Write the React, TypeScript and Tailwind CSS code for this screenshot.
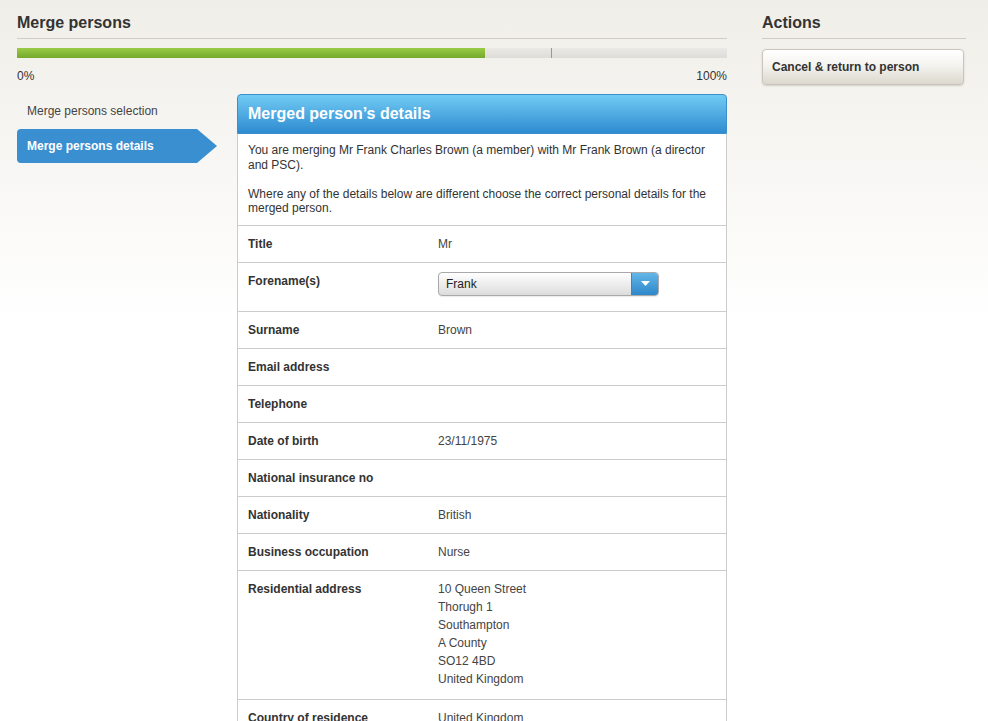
const rows: { label: string; value?: string[]; select?: string }[] = [
  { label: "Title", value: ["Mr"] },
  { label: "Forename(s)", select: "Frank" },
  { label: "Surname", value: ["Brown"] },
  { label: "Email address" },
  { label: "Telephone" },
  { label: "Date of birth", value: ["23/11/1975"] },
  { label: "National insurance no" },
  { label: "Nationality", value: ["British"] },
  { label: "Business occupation", value: ["Nurse"] },
  {
    label: "Residential address",
    value: ["10 Queen Street", "Thorugh 1", "Southampton", "A County", "SO12 4BD", "United Kingdom"],
  },
  { label: "Country of residence", value: ["United Kingdom"] },
];

function Select({ value }: { value: string }) {
  return (
    <div className="flex h-[24px] w-[221px] overflow-hidden rounded-[4px] border border-[#a9a9a9] bg-gradient-to-b from-white to-[#dcdcdc] shadow-[0_1px_1px_rgba(0,0,0,0.08)]">
      <span className="flex-1 pl-[7px] text-[12px] leading-[22px] text-[#222]">{value}</span>
      <span className="flex w-[27px] items-center justify-center border-l border-[#3a86c0] bg-gradient-to-b from-[#62b6e8] to-[#2d87c9]">
        <svg width="9" height="5" viewBox="0 0 9 5">
          <path d="M0 0h9L4.5 5z" fill="#fff" />
        </svg>
      </span>
    </div>
  );
}

export default function App() {
  return (
    <div className="min-h-[721px] bg-[linear-gradient(#f0eee8,#ffffff_320px)] font-['Liberation_Sans',Arial,sans-serif] text-[#333]">
      <div className="flex px-[17px] pt-[13px]">
        {/* main column */}
        <div className="w-[710px] shrink-0">
          <h1 className="border-b border-[#cfccc5] pb-[5px] text-[16px] font-bold leading-[20px] text-[#333]">
            Merge persons
          </h1>
          <div className="relative mt-[9px] flex h-[10px] bg-[linear-gradient(#ebe9e5,#dedcd8)]">
            <div className="h-full w-[468px] bg-[linear-gradient(#9acb46,#75a92c)]" />
            <div className="absolute left-[534px] top-0 h-full w-px bg-[#9a9893]" />
          </div>
          <div className="mt-[10px] flex justify-between text-[12px] leading-[16px] text-[#333]">
            <span>0%</span>
            <span>100%</span>
          </div>

          <div className="mt-[10px] flex gap-[20px]">
            <nav className="w-[200px] shrink-0 text-[12px]">
              <div className="h-[34px] pl-[10px] leading-[34px] text-[#444]">Merge persons selection</div>
              <div className="mt-px h-[34px] rounded-l-[4px] bg-[#3a8fd1] pl-[10px] font-bold leading-[34px] text-white [clip-path:polygon(0_0,calc(100%-20px)_0,100%_50%,calc(100%-20px)_100%,0_100%)]">
                Merge persons details
              </div>
            </nav>

            <section className="w-[490px] shrink-0">
              <div className="h-[40px] rounded-t-[4px] border border-[#3b8fcc] bg-[linear-gradient(#72cbf4,#2e8bd0)] pl-[10px] text-[16px] font-bold leading-[37px] text-white">
                Merged person’s details
              </div>
              <div className="border-x border-[#cccccc] bg-white">
                <div className="px-[10px] pb-[9px] pt-[9px] text-[12px] leading-[14.5px] text-[#333]">
                  <p>You are merging Mr Frank Charles Brown (a member) with Mr Frank Brown (a director and PSC).</p>
                  <p className="mt-[14.5px]">
                    Where any of the details below are different choose the correct personal details for the merged
                    person.
                  </p>
                </div>
                {rows.map((r) => (
                  <div key={r.label} className="flex border-t border-[#cccccc] px-[10px] text-[12px]">
                    <div className="w-[190px] shrink-0 py-[11px] font-bold leading-[14px] text-[#333]">{r.label}</div>
                    {r.select ? (
                      <div className="pb-[15px] pt-[9px]">
                        <Select value={r.select} />
                      </div>
                    ) : (
                      <div
                        className={
                          (r.value && r.value.length > 1 ? "pb-[11px] " : "pb-[9px] ") +
                          "pt-[9px] leading-[18px] text-[#444]"
                        }
                      >
                        {(r.value ?? [""]).map((v, i) => (
                          <div key={i} className="min-h-[18px]">
                            {v}
                          </div>
                        ))}
                      </div>
                    )}
                  </div>
                ))}
              </div>
            </section>
          </div>
        </div>

        {/* actions column */}
        <aside className="ml-[35px] w-[204px] shrink-0">
          <h2 className="border-b border-[#cfccc5] pb-[5px] text-[16px] font-bold leading-[20px] text-[#333]">
            Actions
          </h2>
          <button className="mt-[10px] h-[36px] w-[202px] rounded-[4px] border border-[#c9c5bd] bg-[linear-gradient(#ffffff,#f4f3ef_45%,#dcd8cf)] pl-[9px] text-left text-[12px] font-bold text-[#333] shadow-[0_1px_2px_rgba(0,0,0,0.15)]">
            Cancel &amp; return to person
          </button>
        </aside>
      </div>
    </div>
  );
}
